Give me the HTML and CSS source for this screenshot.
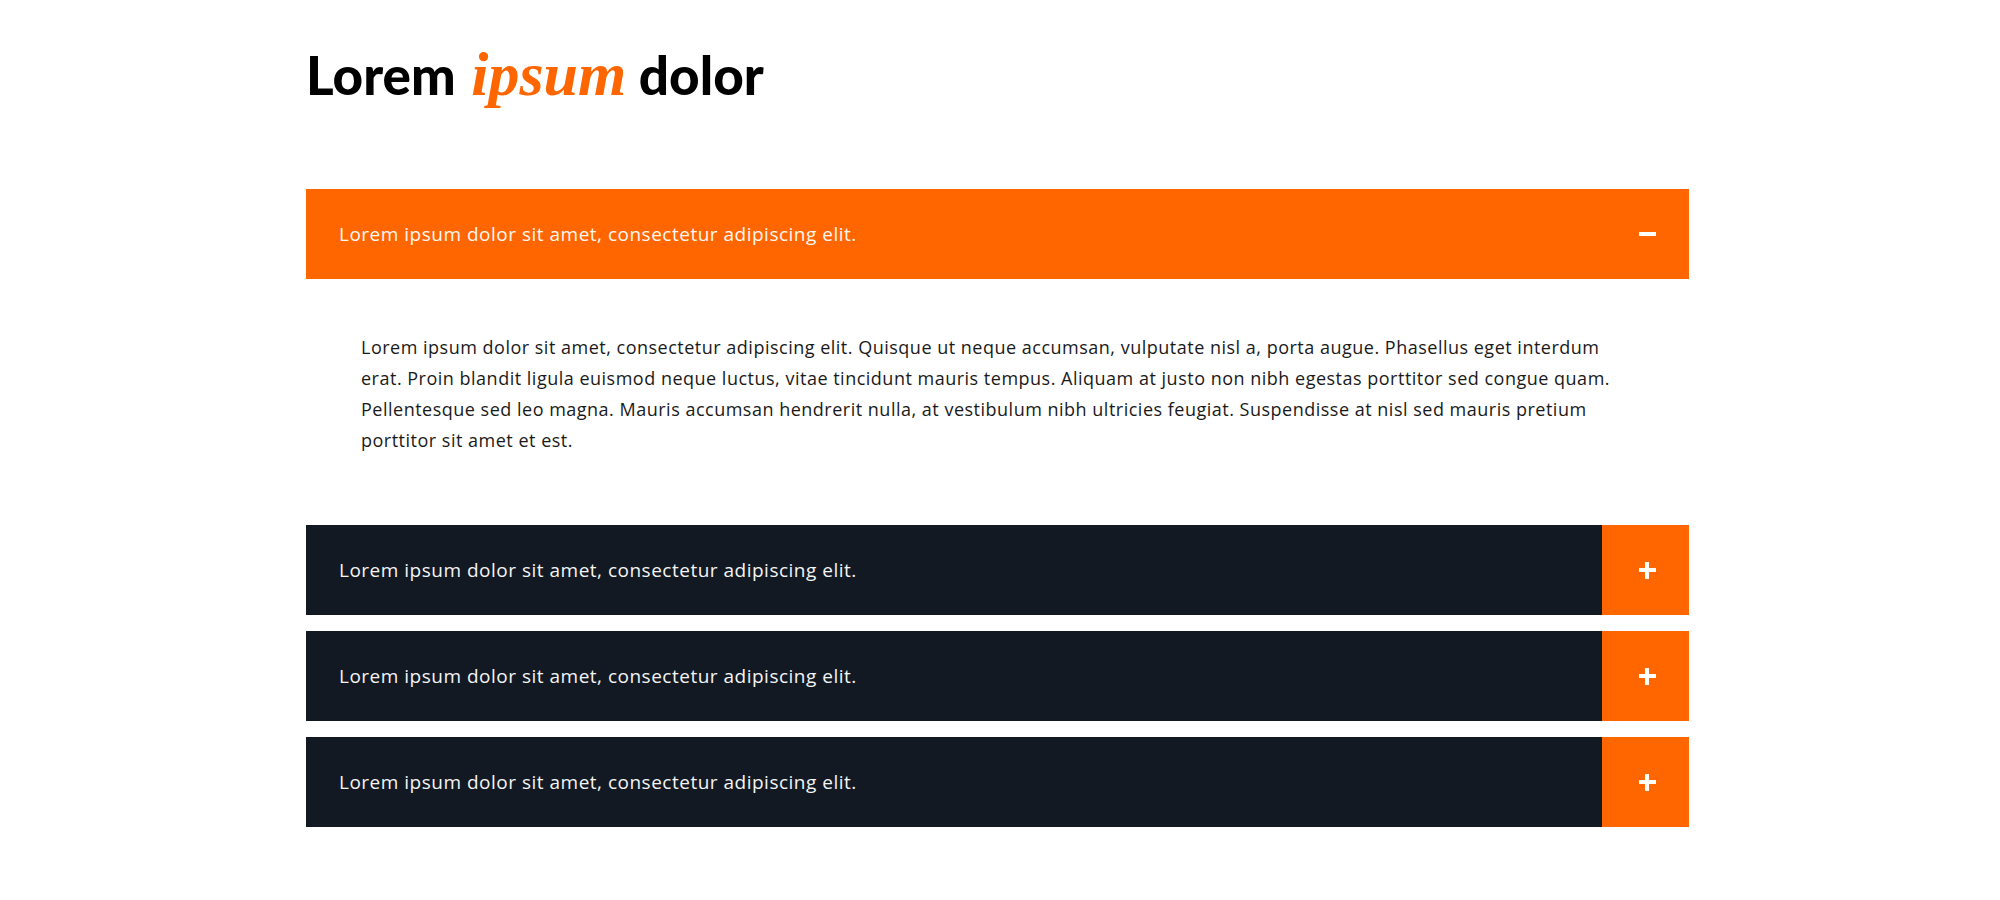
FILE: index.html
```html
<!DOCTYPE html>
<html lang="en">
<head>
<meta charset="utf-8">
<title>Accordion</title>
<link rel="stylesheet" href="styles.css">
</head>
<body>
<main class="page">
  <h1 class="heading">Lorem <em class="heading-accent">ipsum</em> dolor</h1>
  <div class="accordion">
    <section class="item item-open">
      <div class="item-header">
        <span class="item-title">Lorem ipsum dolor sit amet, consectetur adipiscing elit.</span>
        <span class="item-toggle"><span class="icon-minus"></span></span>
      </div>
      <div class="item-body">
        <p>Lorem ipsum dolor sit amet, consectetur adipiscing elit. Quisque ut neque accumsan, vulputate nisl a, porta augue. Phasellus eget interdum erat. Proin blandit ligula euismod neque luctus, vitae tincidunt mauris tempus. Aliquam at justo non nibh egestas porttitor sed congue quam. Pellentesque sed leo magna. Mauris accumsan hendrerit nulla, at vestibulum nibh ultricies feugiat. Suspendisse at nisl sed mauris pretium porttitor sit amet et est.</p>
      </div>
    </section>
    <section class="item">
      <div class="item-header">
        <span class="item-title">Lorem ipsum dolor sit amet, consectetur adipiscing elit.</span>
        <span class="item-toggle"><span class="icon-plus"></span></span>
      </div>
    </section>
    <section class="item">
      <div class="item-header">
        <span class="item-title">Lorem ipsum dolor sit amet, consectetur adipiscing elit.</span>
        <span class="item-toggle"><span class="icon-plus"></span></span>
      </div>
    </section>
    <section class="item">
      <div class="item-header">
        <span class="item-title">Lorem ipsum dolor sit amet, consectetur adipiscing elit.</span>
        <span class="item-toggle"><span class="icon-plus"></span></span>
      </div>
    </section>
  </div>
</main>
</body>
</html>
```

FILE: styles.css
```css
html, body {
  margin: 0;
  padding: 0;
  background: #ffffff;
}

body {
  font-family: "Open Sans", "Liberation Sans", sans-serif;
  color: #1a1a1a;
}

.page {
  width: 1383px;
  margin-left: 306px;
  padding-top: 39px;
}

.heading {
  margin: 0 0 79px 0;
  font-family: "Lato", sans-serif;
  font-weight: 900;
  font-size: 53px;
  line-height: normal;
  color: #000000;
}

.heading-accent {
  font-family: "Liberation Serif", serif;
  font-style: italic;
  font-weight: 700;
  font-size: 62px;
  color: #ff6600;
  padding-left: 3px;
}

.accordion {
  display: flex;
  flex-direction: column;
  gap: 16px;
}

.item-header {
  display: flex;
  align-items: stretch;
  height: 90px;
  background: #121923;
  color: #f4f4f4;
}

.item-open .item-header {
  background: #ff6600;
  color: #fff8f2;
}

.item-title {
  flex: 1;
  display: flex;
  align-items: center;
  padding-left: 33px;
  font-size: 19px;
  letter-spacing: 0.5px;
  font-weight: 400;
}

.item-toggle {
  width: 87px;
  background: #ff6600;
  display: flex;
  align-items: center;
  justify-content: center;
  padding-left: 3px;
  box-sizing: border-box;
}

.icon-plus,
.icon-minus {
  position: relative;
  width: 17px;
  height: 17px;
}

.icon-plus::before,
.icon-minus::before {
  content: "";
  position: absolute;
  left: 0;
  top: 6px;
  width: 17px;
  height: 4px;
  background: #ffffff;
}

.icon-plus::after {
  content: "";
  position: absolute;
  left: 6.5px;
  top: 0;
  width: 4px;
  height: 17px;
  background: #ffffff;
}

.item-body {
  padding: 53px 55px 53px 55px;
}

.item-body p {
  margin: 0;
  font-size: 18px;
  letter-spacing: 0.5px;
  line-height: 31px;
  color: #1a1a1a;
}
```
